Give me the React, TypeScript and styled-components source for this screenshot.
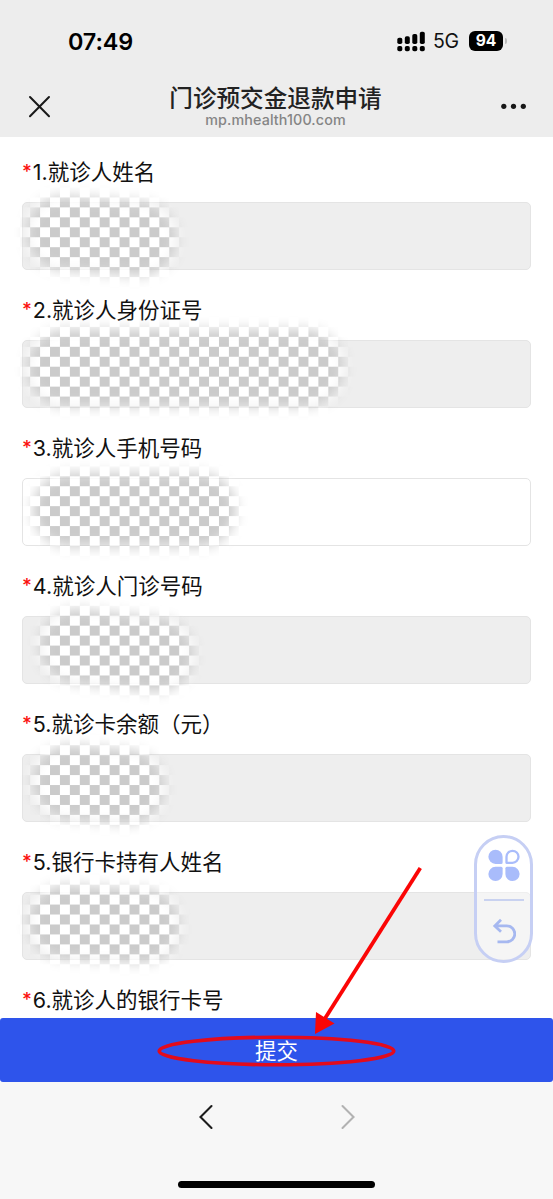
import React from "react";
import styled, { createGlobalStyle } from "styled-components";

const GlobalStyle = createGlobalStyle`
  * { box-sizing: border-box; }
  html, body { margin: 0; padding: 0; }
  body {
    background: #fff;
    font-family: Inter, "Noto Sans CJK SC", sans-serif;
    color: #111;
    overflow: hidden;
  }
`;

const Screen = styled.div`
  position: relative;
  display: flex;
  flex-direction: column;
  width: 553px;
  height: 1199px;
  overflow: hidden;
  background: #fff;
`;

const Header = styled.header`
  flex: none;
  height: 137px;
  background: #ededed;
  display: flex;
  flex-direction: column;
`;

const StatusBar = styled.div`
  height: 82px;
  padding: 0 46px 0 68px;
  display: flex;
  align-items: center;
  justify-content: space-between;
`;

const Clock = styled.time`
  font-size: 23.4px;
  font-weight: 600;
  letter-spacing: -0.1px;
  color: #000;
`;

const StatusIcons = styled.div`
  display: flex;
  align-items: center;
`;

const Network = styled.span`
  margin-left: 7px;
  width: 36px;
  font-size: 19.5px;
  letter-spacing: -0.3px;
  color: #111;
`;

const Battery = styled.span`
  width: 34px;
  height: 20px;
  border-radius: 6px;
  background: #000;
  color: #fff;
  font-size: 15.6px;
  line-height: 20px;
  font-weight: 700;
  text-align: center;
`;

const BatteryTip = styled.span`
  width: 2px;
  height: 6px;
  margin-left: 2px;
  border-radius: 0 2px 2px 0;
  background: #bcbcbc;
`;

const NavBar = styled.div`
  flex: 1;
  display: grid;
  grid-template-columns: 80px 1fr 80px;
`;

const NavButton = styled.div<{ $end?: boolean }>`
  display: flex;
  justify-content: ${(p) => (p.$end ? "flex-end" : "flex-start")};
  padding: ${(p) => (p.$end ? "20px 26px 0 0" : "13px 0 0 28px")};
`;

const TitleBlock = styled.div`
  display: flex;
  flex-direction: column;
  align-items: center;
  padding: 1px 2px 0 0;
`;

const Title = styled.h1`
  margin: 0;
  font-size: 23.6px;
  line-height: 32px;
  font-weight: 500;
  color: #222;
  white-space: nowrap;
`;

const Domain = styled.span`
  font-size: 14.3px;
  line-height: 14px;
  margin-top: -2px;
  letter-spacing: 0.12px;
  font-weight: 500;
  color: #858585;
`;

const Form = styled.main`
  flex: none;
  height: 881px;
  padding: 17px 22px 0;
  overflow: hidden;
`;

const Field = styled.div`
  height: 138px;
`;

const Label = styled.label`
  display: flex;
  height: 48px;
  line-height: 36px;
  font-size: 21.5px;
  white-space: nowrap;
  color: #111;
`;

const Required = styled.span`
  width: 10.8px;
  font-size: 19px;
  font-weight: 500;
  color: #fb1010;
`;

const Input = styled.div<{ $editable?: boolean }>`
  height: 68px;
  border: 1.5px solid #e4e4e4;
  border-radius: 5px;
  background: ${(p) => (p.$editable ? "#fff" : "#eeeeee")};
`;

const Submit = styled.button`
  flex: none;
  height: 63.5px;
  padding: 0;
  border: 0;
  border-radius: 3px;
  background: #2e54eb;
  color: #fff;
  font: 400 21.4px/66px Inter, "Noto Sans CJK SC", sans-serif;
`;

const BottomArea = styled.footer`
  flex: 1;
  display: flex;
  flex-direction: column;
  align-items: center;
  justify-content: space-between;
  padding: 22px 0 11px;
  background: #f7f7f7;
`;

const BrowserNav = styled.nav`
  width: 158px;
  display: flex;
  justify-content: space-between;
`;

const HomeIndicator = styled.div`
  width: 197px;
  height: 7.5px;
  border-radius: 4px;
  background: #000;
`;

const FloatingPanel = styled.aside`
  position: absolute;
  left: 474px;
  top: 835px;
  width: 59px;
  height: 128px;
  border: 3px solid #c6cff4;
  border-radius: 30px;
  background: rgba(255, 255, 255, 0.4);
  display: flex;
  flex-direction: column;
  align-items: center;
  padding-top: 11px;
`;

const Divider = styled.hr`
  width: 40px;
  height: 1.5px;
  margin: 17px 0 17px;
  border: 0;
  background: #c9d2f0;
`;

const Overlay = styled.svg`
  position: absolute;
  inset: 0;
  pointer-events: none;
`;

const fields = [
  { text: "1.就诊人姓名" },
  { text: "2.就诊人身份证号" },
  { text: "3.就诊人手机号码", editable: true },
  { text: "4.就诊人门诊号码" },
  { text: "5.就诊卡余额（元）" },
  { text: "5.银行卡持有人姓名" },
  { text: "6.就诊人的银行卡号" },
];

/* Soft brush strokes that hide the personal data: start, end, width */
const strokes = [
  [64, 233, 139, 239, 74],
  [66, 368, 305, 368, 77],
  [70, 510, 199, 510, 74],
  [77, 646, 156, 655, 74],
  [70, 782, 127, 787, 74],
  [66, 922, 142, 926, 74],
];

const SignalIcon = () => (
  <svg width="29" height="21" viewBox="0 0 29 21" fill="#000">
    {[0, 1, 2, 3].map((i) => (
      <g key={i}>
        <rect x={0.3 + i * 7.5} y={[6.8, 5.3, 3, 0.8][i]} width="5" height={[6.2, 7.7, 10, 12.2][i]} rx="1.8" />
        <rect x={0.3 + i * 7.5} y="15" width="5" height="5.2" rx="1.8" />
      </g>
    ))}
  </svg>
);

const CloseIcon = () => (
  <svg width="23" height="23" viewBox="0 0 23 23" fill="none" stroke="#191919" strokeWidth="2" strokeLinecap="round">
    <path d="M2 2 21 21.3M21 2 2 21.3" />
  </svg>
);

const MoreIcon = () => (
  <svg width="27" height="8" viewBox="0 0 27 8" fill="#181818">
    <circle cx="3.8" cy="4.3" r="2.6" />
    <circle cx="13.5" cy="4.3" r="2.6" />
    <circle cx="23.3" cy="4.3" r="2.6" />
  </svg>
);

const Chevron = ({ forward }: { forward?: boolean }) => (
  <svg width="16" height="26" viewBox="0 0 16 26" fill="none" stroke={forward ? "#b2b2b2" : "#1c1c1c"} strokeWidth="2.1" strokeLinecap="round">
    <path d={forward ? "M2.5 2 13.5 13 2.5 24" : "M13.5 2 2.5 13 13.5 24"} />
  </svg>
);

const ClusterIcon = () => (
  <svg width="32" height="33" viewBox="0 0 32 33" fill="#a9bcfb">
    <path d="M7.5.7a7.1 7.1 0 0 1 7.1 7.1V13.4q0 1.5-1.5 1.5H7.5A7.1 7.1 0 0 1 7.5.7Z" />
    <path d="M7.5 32a7.1 7.1 0 0 0 7.1-7.1v-5.6q0-1.5-1.5-1.5H7.5a7.1 7.1 0 0 0 0 14.2Z" />
    <path d="M24.5 32a7.1 7.1 0 0 1-7.1-7.1v-5.6q0-1.5 1.5-1.5h5.6a7.1 7.1 0 0 1 0 14.2Z" />
    <path d="M24.5 1.8a6 6 0 0 0-6 6v6h6a6 6 0 0 0 0-12Z" fill="none" stroke="#a9bcfb" strokeWidth="2.3" strokeLinejoin="round" />
  </svg>
);

const BackIcon = () => (
  <svg width="24" height="26" viewBox="0 0 24 26" fill="none" stroke="#a6b8f0" strokeWidth="2.8">
    <path d="M9 1.7 2.8 8 9 13.8M3 7.8h11.8a8 8 0 0 1 0 16H5.5" />
  </svg>
);

const Annotations = () => (
  <Overlay width="553" height="1199" viewBox="0 0 553 1199">
    <defs>
      <pattern id="checker" x="0.3" y="197.4" width="19.88" height="19.92" patternUnits="userSpaceOnUse">
        <rect width="19.88" height="19.92" fill="#fff" />
        <rect width="9.94" height="9.96" fill="#cbcbcb" />
        <rect x="9.94" y="9.96" width="9.94" height="9.96" fill="#cbcbcb" />
      </pattern>
      <filter id="feather" x="0" y="0" width="553" height="1199" filterUnits="userSpaceOnUse">
        <feGaussianBlur stdDeviation="6.5" />
      </filter>
      <mask id="brush" x="0" y="0" width="553" height="1199" maskUnits="userSpaceOnUse">
        <g filter="url(#feather)" stroke="#fff" strokeLinecap="round">
          {strokes.map(([x1, y1, x2, y2, w]) => (
            <line key={y1} x1={x1} y1={y1} x2={x2} y2={y2} strokeWidth={w} />
          ))}
        </g>
      </mask>
    </defs>
    <rect width="553" height="1010" fill="url(#checker)" mask="url(#brush)" />
    <line x1="420.3" y1="868" x2="324" y2="1020" stroke="#fb0505" strokeWidth="3.8" />
    <path d="M316 1012 334.5 1023.5 315 1034Z" fill="#fb0505" />
    <ellipse cx="276.5" cy="1051" rx="117.3" ry="13.8" fill="none" stroke="#e30b1c" strokeWidth="3.6" />
  </Overlay>
);

export default function App() {
  return (
    <>
      <GlobalStyle />
      <Screen>
        <Header>
          <StatusBar>
            <Clock>07:49</Clock>
            <StatusIcons>
              <SignalIcon />
              <Network>5G</Network>
              <Battery>94</Battery>
              <BatteryTip />
            </StatusIcons>
          </StatusBar>
          <NavBar>
            <NavButton>
              <CloseIcon />
            </NavButton>
            <TitleBlock>
              <Title>门诊预交金退款申请</Title>
              <Domain>mp.mhealth100.com</Domain>
            </TitleBlock>
            <NavButton $end>
              <MoreIcon />
            </NavButton>
          </NavBar>
        </Header>
        <Form>
          {fields.map((f) => (
            <Field key={f.text}>
              <Label>
                <Required>*</Required>
                {f.text}
              </Label>
              <Input $editable={f.editable} />
            </Field>
          ))}
        </Form>
        <Submit>提交</Submit>
        <BottomArea>
          <BrowserNav>
            <Chevron />
            <Chevron forward />
          </BrowserNav>
          <HomeIndicator />
        </BottomArea>
        <FloatingPanel>
          <ClusterIcon />
          <Divider />
          <BackIcon />
        </FloatingPanel>
        <Annotations />
      </Screen>
    </>
  );
}
